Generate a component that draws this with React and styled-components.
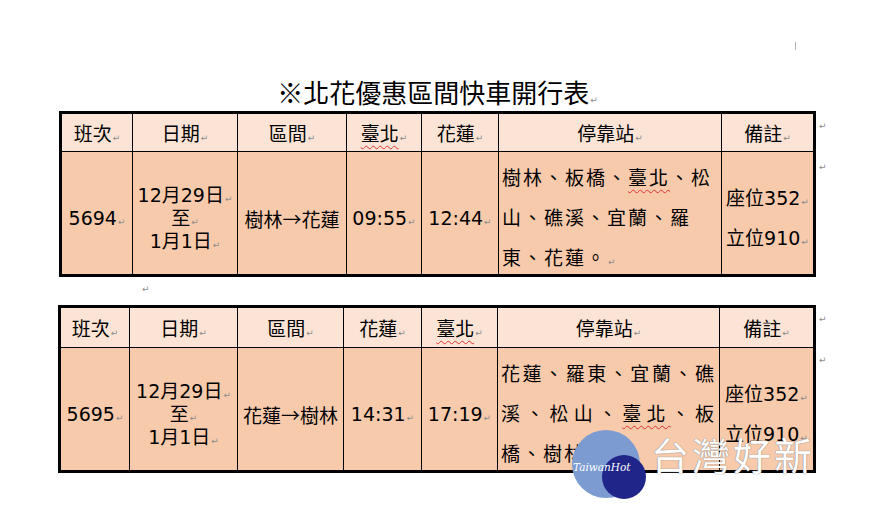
import React from "react";
import styled, { createGlobalStyle } from "styled-components";

const GlobalStyle = createGlobalStyle`
  * { box-sizing: border-box; }
  body {
    margin: 0;
    background: #ffffff;
    font-family: "DejaVu Sans", "Noto Sans CJK TC", sans-serif;
    color: #000;
  }
`;

const Page = styled.div`
  position: relative;
  width: 874px;
  height: 522px;
  padding-top: 42px;
  overflow: hidden;
`;

const CornerMark = styled.div`
  margin-left: 795px;
  width: 1px;
  height: 8px;
  background: #b0b0b0;
`;

const Title = styled.div`
  margin: 26px 0 0 59px;
  width: 757px;
  height: 32px;
  line-height: 32px;
  text-align: center;
  font-family: "Noto Sans CJK TC", sans-serif;
  font-size: 26px;
`;

const Mark = styled.span`
  font-family: "DejaVu Sans", sans-serif;
  font-size: 9px;
  line-height: 1;
  color: #8c8c8c;
  margin-left: 1px;
`;

const TableRow = styled.div`
  display: flex;
  align-items: flex-start;
  margin-top: ${(p) => p.$top}px;
  padding-left: ${(p) => p.$left}px;
`;

const Table = styled.table`
  table-layout: fixed;
  border-collapse: separate;
  border-spacing: 0;
  border: 3px solid #000;
  width: ${(p) => p.$width}px;
  font-size: 19px;
`;

const Col = styled.col`
  width: ${(p) => p.$w}px;
`;

const HeadCell = styled.th`
  height: ${(p) => p.$h}px;
  padding: 0;
  font-weight: normal;
  background: #fbe4d5;
  border-right: ${(p) => (p.$last ? "none" : "1px solid #000")};
  border-bottom: 1px solid #000;
  text-align: center;
  vertical-align: middle;
  white-space: nowrap;
`;

const BodyCell = styled.td`
  height: 122px;
  padding: 0 ${(p) => (p.$pad ? 3 : 0)}px;
  background: #f7caac;
  border-right: ${(p) => (p.$last ? "none" : "1px solid #000")};
  text-align: ${(p) => (p.$left ? "left" : "center")};
  vertical-align: middle;
  white-space: nowrap;
  font-family: ${(p) =>
    p.$cjk ? `"Noto Sans CJK TC", sans-serif` : "inherit"};
`;

/* Word sets cell text a few px below the middle; net height stays the same */
const CellInner = styled.div`
  margin: 5px 0 -5px;
`;

const Squiggle = styled.span`
  text-decoration: underline wavy #d33;
  text-decoration-thickness: 1px;
  text-underline-offset: 4px;
`;

const Line = styled.div`
  height: ${(p) => p.$lh}px;
  line-height: ${(p) => p.$lh}px;
`;

const StopLine = styled.div`
  height: 40px;
  line-height: 40px;
  letter-spacing: 2px;
  text-align: ${(p) => (p.$justify ? "justify" : "left")};
  text-align-last: ${(p) => (p.$justify ? "justify" : "left")};
`;

const EndMarks = styled.div`
  display: flex;
  flex-direction: column;
  padding-left: 2px;
`;

const EndMark = styled(Mark)`
  display: block;
  line-height: 10px;
  margin-top: ${(p) => p.$top}px;
`;

const EmptyPara = styled.div`
  height: 28px;
  padding: 5px 0 0 141px;
  line-height: 10px;
`;

const Watermark = styled.div`
  position: absolute;
  left: 572px;
  top: 430px;
  display: flex;
  align-items: flex-start;
  pointer-events: none;
`;

const Brand = styled.div`
  margin: 5px 0 0 3px;
  font-family: "Noto Sans CJK TC", sans-serif;
  font-size: 38px;
  line-height: 38px;
  letter-spacing: 3px;
  color: #ffffff;
  text-shadow: 0 0 1px #8a8a8a, 0 0 1px #8a8a8a;
`;

const Logo = () => (
  <svg width="76" height="70" viewBox="0 0 76 70">
    <circle cx="34" cy="34" r="34" fill="#7b9bd1" />
    <circle cx="52" cy="47" r="22" fill="#1f2589" />
    <text
      x="1"
      y="41"
      fill="#ffffff"
      fontFamily="'DejaVu Serif', serif"
      fontStyle="italic"
      fontSize="10.5"
    >
      TaiwanHot
    </text>
  </svg>
);

const trains = [
  {
    left: 59,
    top: 3,
    width: 757,
    cols: [71, 105, 109, 75, 77, 223, 91],
    headH: 38,
    no: "5694",
    from: "臺北",
    to: "花蓮",
    route: "樹林→花蓮",
    dep: "09:55",
    arr: "12:44",
    stops: [
      { text: ["樹林、板橋、", "臺北", "、松"], justify: false },
      { text: ["山、礁溪、宜蘭、羅"], justify: false },
      { text: ["東、花蓮。"], justify: false, mark: true },
    ],
    marks: [10, 31],
  },
  {
    left: 58,
    top: 0,
    width: 758,
    cols: [69, 108, 106, 78, 76, 222, 93],
    headH: 40,
    no: "5695",
    from: "花蓮",
    to: "臺北",
    route: "花蓮→樹林",
    dep: "14:31",
    arr: "17:19",
    stops: [
      { text: ["花蓮、羅東、宜蘭、礁"], justify: true },
      { text: ["溪、松山、", "臺北", "、板"], justify: true },
      { text: ["橋、樹林。"], justify: false, mark: true },
    ],
    marks: [9, 31],
  },
];

const Place = ({ name }) =>
  name === "臺北" ? <Squiggle>{name}</Squiggle> : <span>{name}</span>;

const Timetable = ({ t }) => (
  <TableRow $top={t.top} $left={t.left}>
    <Table $width={t.width}>
      <colgroup>
        {t.cols.map((w, i) => (
          <Col key={i} $w={w} />
        ))}
      </colgroup>
      <thead>
        <tr>
          <HeadCell $h={t.headH}>班次<Mark>↵</Mark></HeadCell>
          <HeadCell $h={t.headH}>日期<Mark>↵</Mark></HeadCell>
          <HeadCell $h={t.headH}>區間<Mark>↵</Mark></HeadCell>
          <HeadCell $h={t.headH}>
            <Place name={t.from} />
            <Mark>↵</Mark>
          </HeadCell>
          <HeadCell $h={t.headH}>
            <Place name={t.to} />
            <Mark>↵</Mark>
          </HeadCell>
          <HeadCell $h={t.headH}>停靠站<Mark>↵</Mark></HeadCell>
          <HeadCell $h={t.headH} $last>備註<Mark>↵</Mark></HeadCell>
        </tr>
      </thead>
      <tbody>
        <tr>
          <BodyCell>
            <CellInner>{t.no}<Mark>↵</Mark></CellInner>
          </BodyCell>
          <BodyCell>
            <CellInner>
              <Line $lh={23}>12月29日<Mark>↵</Mark></Line>
              <Line $lh={23}>至<Mark>↵</Mark></Line>
              <Line $lh={23}>1月1日<Mark>↵</Mark></Line>
            </CellInner>
          </BodyCell>
          <BodyCell $cjk>
            <CellInner>{t.route}</CellInner>
          </BodyCell>
          <BodyCell>
            <CellInner>{t.dep}<Mark>↵</Mark></CellInner>
          </BodyCell>
          <BodyCell>
            <CellInner>{t.arr}<Mark>↵</Mark></CellInner>
          </BodyCell>
          <BodyCell $left $pad>
            <CellInner>
              {t.stops.map((line, i) => (
                <StopLine key={i} $justify={line.justify}>
                  {line.text.map((part, j) =>
                    part === "臺北" ? (
                      <Squiggle key={j}>{part}</Squiggle>
                    ) : (
                      <span key={j}>{part}</span>
                    )
                  )}
                  {line.mark && <Mark>↵</Mark>}
                </StopLine>
              ))}
            </CellInner>
          </BodyCell>
          <BodyCell $last>
            <CellInner>
              <Line $lh={40}>座位352<Mark>↵</Mark></Line>
              <Line $lh={40}>立位910<Mark>↵</Mark></Line>
            </CellInner>
          </BodyCell>
        </tr>
      </tbody>
    </Table>
    <EndMarks>
      {t.marks.map((m, i) => (
        <EndMark key={i} $top={m}>↵</EndMark>
      ))}
    </EndMarks>
  </TableRow>
);

export default function App() {
  return (
    <Page>
      <GlobalStyle />
      <CornerMark />
      <Title>
        ※北花優惠區間快車開行表<Mark>↵</Mark>
      </Title>
      <Timetable t={trains[0]} />
      <EmptyPara>
        <Mark>↵</Mark>
      </EmptyPara>
      <Timetable t={trains[1]} />
      <Watermark>
        <Logo />
        <Brand>台灣好新</Brand>
      </Watermark>
    </Page>
  );
}
